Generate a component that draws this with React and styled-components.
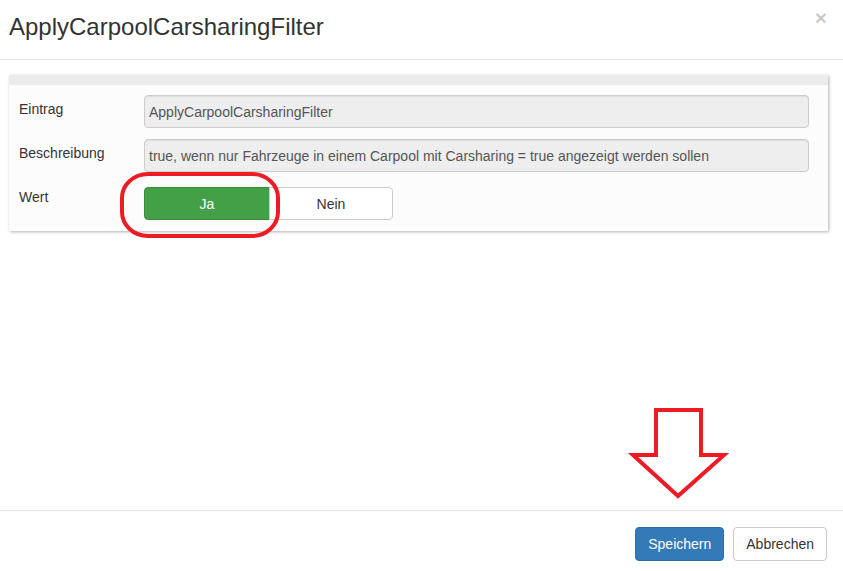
import React from 'react';
import styled, { createGlobalStyle } from 'styled-components';

const GlobalStyle = createGlobalStyle`
  html, body {
    margin: 0;
    padding: 0;
    background: #ffffff;
  }
  body {
    font-family: "Liberation Sans", Arial, sans-serif;
    font-size: 14px;
    color: #333333;
  }
`;

const Modal = styled.div`
  position: relative;
  width: 843px;
  height: 571px;
  display: flex;
  flex-direction: column;
  background: #ffffff;
  overflow: hidden;
`;

const Header = styled.div`
  height: 60px;
  box-sizing: border-box;
  border-bottom: 1px solid #e5e5e5;
  display: flex;
  align-items: flex-start;
  justify-content: space-between;
  padding: 0 16px 0 9px;
`;

const Title = styled.h4`
  margin: 0;
  padding-top: 12px;
  font-size: 24px;
  font-weight: normal;
  line-height: 30px;
  color: #333333;
`;

const Close = styled.button`
  border: 0;
  background: none;
  padding: 0;
  margin-top: 7px;
  font-family: "Liberation Sans", Arial, sans-serif;
  font-size: 21px;
  font-weight: bold;
  line-height: 21px;
  color: #000000;
  opacity: 0.2;
  cursor: pointer;
`;

const Body = styled.div`
  flex: 1;
  padding: 15px 15px 0 9px;
`;

const Panel = styled.div`
  background: #fcfcfc;
  box-shadow: 1px 1px 3px rgba(0, 0, 0, 0.3);
`;

const PanelHeading = styled.div`
  height: 10px;
  background: #ebebeb;
`;

const PanelBody = styled.div`
  padding: 10px 19px 11px 10px;
  display: flex;
  flex-direction: column;
  gap: 11px;
`;

const Row = styled.div`
  display: grid;
  grid-template-columns: 125px 1fr;
  align-items: start;
  margin-top: ${p => p.$top || 0}px;
`;

const Label = styled.label`
  padding-top: ${p => (p.$pad !== undefined ? p.$pad : 4)}px;
  line-height: 20px;
  color: #333333;
`;

const Field = styled.div`
  height: 33px;
  box-sizing: border-box;
  border: 1px solid #cccccc;
  border-radius: 4px;
  background: #eeeeee;
  color: #555555;
  padding: 0 4px;
  display: flex;
  align-items: center;
  box-shadow: inset 0 1px 1px rgba(0, 0, 0, 0.075);
`;

const Toggle = styled.div`
  display: flex;
`;

const ToggleButton = styled.button`
  width: ${p => p.$width}px;
  height: 33px;
  box-sizing: border-box;
  font-family: "Liberation Sans", Arial, sans-serif;
  font-size: 14px;
  border: 1px solid ${p => (p.$active ? '#3a8a3e' : '#cccccc')};
  background: ${p => (p.$active ? '#43a047' : '#ffffff')};
  color: ${p => (p.$active ? '#ffffff' : '#333333')};
  border-radius: ${p => (p.$first ? '4px 0 0 4px' : '0 4px 4px 0')};
  margin-left: ${p => (p.$first ? 0 : -1)}px;
`;

const Footer = styled.div`
  height: 61px;
  box-sizing: border-box;
  border-top: 1px solid #e5e5e5;
  display: flex;
  justify-content: flex-end;
  align-items: flex-start;
  gap: 9px;
  padding: 16px 16px 0 0;
`;

const Button = styled.button`
  height: 34px;
  box-sizing: border-box;
  padding: 0 12px;
  font-family: "Liberation Sans", Arial, sans-serif;
  font-size: 14px;
  border-radius: 4px;
  border: 1px solid ${p => (p.$primary ? '#2e6da4' : '#cccccc')};
  background: ${p => (p.$primary ? '#337ab7' : '#ffffff')};
  color: ${p => (p.$primary ? '#ffffff' : '#333333')};
`;

const Overlay = styled.svg`
  position: absolute;
  left: 0;
  top: 0;
  pointer-events: none;
`;

export default function App() {
  return (
    <>
      <GlobalStyle />
      <Modal>
        <Header>
          <Title>ApplyCarpoolCarsharingFilter</Title>
          <Close>×</Close>
        </Header>
        <Body>
          <Panel>
            <PanelHeading />
            <PanelBody>
              <Row>
                <Label>Eintrag</Label>
                <Field>ApplyCarpoolCarsharingFilter</Field>
              </Row>
              <Row>
                <Label>Beschreibung</Label>
                <Field>true, wenn nur Fahrzeuge in einem Carpool mit Carsharing = true angezeigt werden sollen</Field>
              </Row>
              <Row $top={4}>
                <Label $pad={0}>Wert</Label>
                <Toggle>
                  <ToggleButton $first $active $width={126}>Ja</ToggleButton>
                  <ToggleButton $width={124}>Nein</ToggleButton>
                </Toggle>
              </Row>
            </PanelBody>
          </Panel>
        </Body>
        <Footer>
          <Button $primary>Speichern</Button>
          <Button>Abbrechen</Button>
        </Footer>
        <Overlay width="843" height="571" viewBox="0 0 843 571">
          <rect x="122" y="174" width="156" height="62" rx="26" ry="24"
            fill="none" stroke="#ed1c24" strokeWidth="4" />
          <polygon points="656,410 701,410 701,455 724,455 678,496 633,455 656,455"
            fill="none" stroke="#ed1c24" strokeWidth="4" strokeLinejoin="miter" />
        </Overlay>
      </Modal>
    </>
  );
}
